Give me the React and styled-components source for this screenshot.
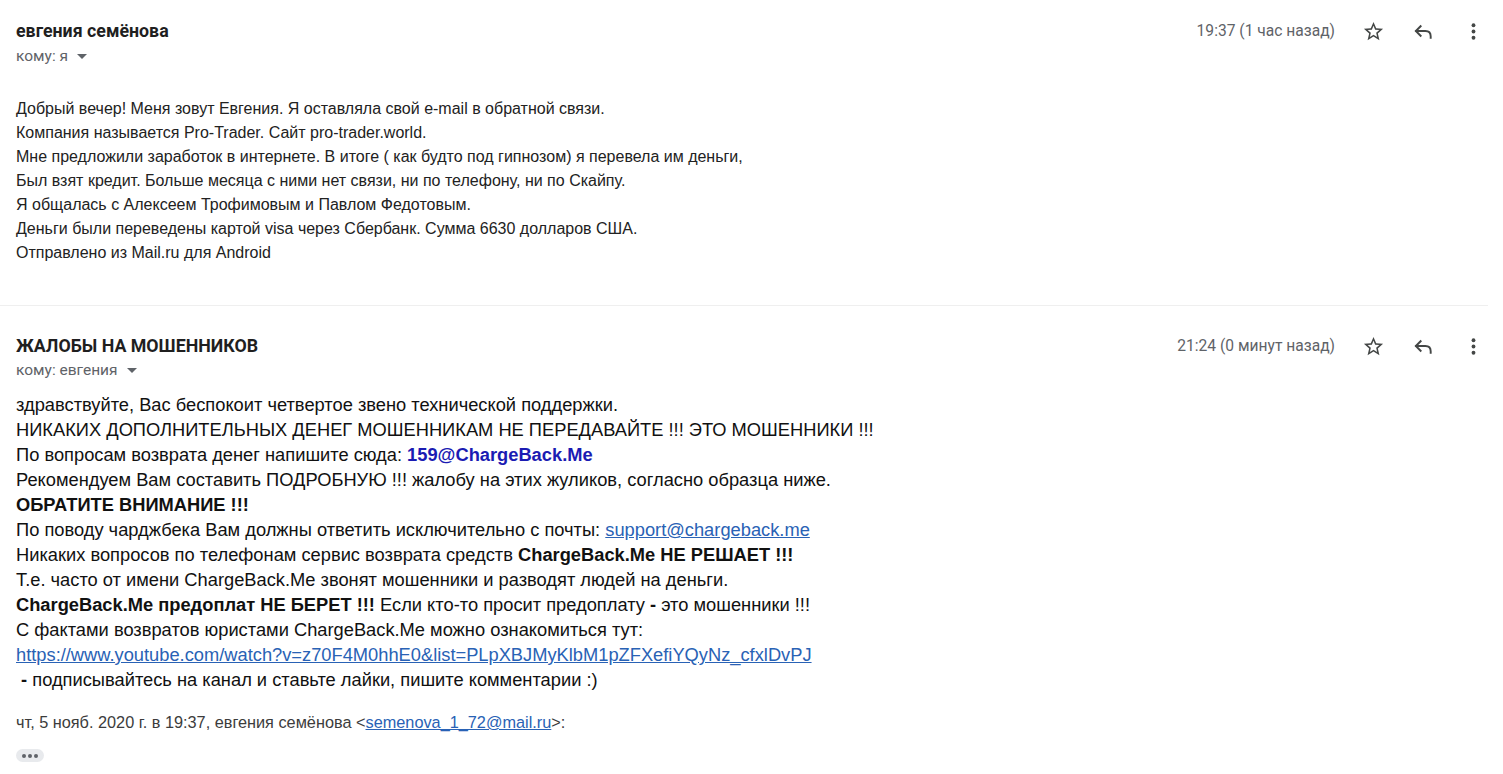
import React from "react";
import styled, { createGlobalStyle } from "styled-components";

const GlobalStyle = createGlobalStyle`
  html, body {
    margin: 0;
    padding: 0;
    background: #fff;
  }
  body {
    font-family: Roboto, "Liberation Sans", Arial, sans-serif;
    color: #222;
  }
`;

const Page = styled.div`
  width: 1503px;
  min-height: 774px;
  overflow: hidden;
`;

const Message = styled.div`
  padding: ${(p) => p.$pad};
`;

const Divider = styled.hr`
  margin: 0 15px 0 0;
  border: none;
  border-top: 1px solid #efefef;
`;

const Header = styled.div`
  display: flex;
  justify-content: space-between;
  align-items: flex-start;
  padding-left: 16px;
  padding-right: 5px;
`;

const Who = styled.div`
  display: flex;
  flex-direction: column;
  gap: ${(p) => p.$gap || "5px"};
`;

const Sender = styled.div`
  font-family: Roboto, "Liberation Sans", sans-serif;
  font-weight: 700;
  font-size: 17.8px;
  line-height: 20px;
  color: #1f1f1f;
`;

const Recipient = styled.div`
  display: flex;
  align-items: center;
  gap: 7px;
  font-family: Roboto, "Liberation Sans", sans-serif;
  font-size: 15.5px;
  line-height: 20px;
  color: #5f6368;
`;

const Caret = styled.span`
  width: 0;
  height: 0;
  border-left: 5px solid transparent;
  border-right: 5px solid transparent;
  border-top: 5px solid #5f6368;
  margin-left: 2px;
`;

const Meta = styled.div`
  display: flex;
  align-items: center;
  height: 20px;
`;

const Time = styled.span`
  font-family: Roboto, "Liberation Sans", sans-serif;
  font-size: 15.6px;
  color: #5f6368;
  margin-right: 13px;
`;

const IconButton = styled.span`
  display: inline-flex;
  align-items: center;
  justify-content: center;
  width: 50px;
  height: 20px;
  color: #444746;
`;

const Body = styled.div`
  padding-left: 16px;
  margin-top: ${(p) => p.$top};
  font-family: "Liberation Sans", Arial, sans-serif;
  font-size: ${(p) => p.$size};
  line-height: ${(p) => p.$lh};
  color: ${(p) => p.$color || "#222"};
`;

const Line = styled.div`
  white-space: nowrap;
`;

const Strong = styled.b`
  font-weight: 700;
`;

const BlueBold = styled.b`
  color: #1b1bb3;
  font-weight: 700;
`;

const Link = styled.a`
  color: #2962b5;
  text-decoration: underline;
`;

const Quote = styled.div`
  margin-top: 20px;
  font-family: "Liberation Sans", Arial, sans-serif;
  font-size: 16.3px;
  line-height: 20px;
  color: #3c3c3c;
`;

const Ellipsis = styled.span`
  display: inline-flex;
  align-items: center;
  justify-content: center;
  gap: 2px;
  margin-top: 17px;
  width: 28px;
  height: 13px;
  border-radius: 7px;
  background: #e8eaed;
`;

const Dot = styled.span`
  width: 4px;
  height: 4px;
  border-radius: 50%;
  background: #5f6368;
`;

const StarIcon = () => (
  <svg width="23" height="23" viewBox="0 0 24 24" fill="currentColor">
    <path d="M22 9.24l-7.19-.62L12 2 9.19 8.63 2 9.24l5.46 4.73L5.82 21 12 17.27 18.18 21l-1.63-7.03L22 9.24zM12 15.4l-3.76 2.27 1-4.28-3.32-2.88 4.38-.38L12 6.1l1.71 4.04 4.38.38-3.32 2.88 1 4.28L12 15.4z" />
  </svg>
);

const ReplyIcon = () => (
  <svg width="23" height="23" viewBox="0 0 24 24" fill="none" stroke="currentColor" strokeWidth="2" strokeLinecap="square">
    <path d="M9 6.5 L4 11.5 L9 16.5" />
    <path d="M4.5 11.5 H14 C17.5 11.5 19.5 13.5 19.5 17 V18.5" />
  </svg>
);

const MoreIcon = () => (
  <svg width="23" height="23" viewBox="0 0 24 24" fill="currentColor">
    <circle cx="12" cy="5.5" r="2" />
    <circle cx="12" cy="12" r="2" />
    <circle cx="12" cy="18.5" r="2" />
  </svg>
);

const MessageHeader = ({ sender, to, time, gap }) => (
  <Header>
    <Who $gap={gap}>
      <Sender>{sender}</Sender>
      <Recipient>
        кому: {to} <Caret />
      </Recipient>
    </Who>
    <Meta>
      <Time>{time}</Time>
      <IconButton>
        <StarIcon />
      </IconButton>
      <IconButton>
        <ReplyIcon />
      </IconButton>
      <IconButton>
        <MoreIcon />
      </IconButton>
    </Meta>
  </Header>
);

const firstLines = [
  "Добрый вечер! Меня зовут Евгения. Я оставляла свой e-mail в обратной связи.",
  "Компания называется Pro-Trader. Сайт pro-trader.world.",
  "Мне предложили заработок в интернете. В итоге ( как будто под гипнозом) я перевела им деньги,",
  "Был взят кредит. Больше месяца с ними нет связи, ни по телефону, ни по Скайпу.",
  "Я общалась с Алексеем Трофимовым и Павлом Федотовым.",
  "Деньги были переведены картой visa через Сбербанк. Сумма 6630 долларов США.",
  "Отправлено из Mail.ru для Android",
];

export default function App() {
  return (
    <Page>
      <GlobalStyle />
      <Message $pad="21px 0 40px">
        <MessageHeader
          sender="евгения семёнова"
          to="я"
          time="19:37 (1 час назад)"
          gap="5px"
        />
        <Body $top="31px" $size="16px" $lh="24px" $color="#222">
          {firstLines.map((l) => (
            <Line key={l}>{l}</Line>
          ))}
        </Body>
      </Message>
      <Divider />

      <Message $pad="30px 0 0">
        <MessageHeader
          sender="ЖАЛОБЫ НА МОШЕННИКОВ"
          to="евгения"
          time="21:24 (0 минут назад)"
          gap="4px"
        />
        <Body $top="12px" $size="18.3px" $lh="25px" $color="#111">
          <Line>здравствуйте, Вас беспокоит четвертое звено технической поддержки.</Line>
          <Line>НИКАКИХ ДОПОЛНИТЕЛЬНЫХ ДЕНЕГ МОШЕННИКАМ НЕ ПЕРЕДАВАЙТЕ !!! ЭТО МОШЕННИКИ !!!</Line>
          <Line>
            По вопросам возврата денег напишите сюда: <BlueBold>159@ChargeBack.Me</BlueBold>
          </Line>
          <Line>Рекомендуем Вам составить ПОДРОБНУЮ !!! жалобу на этих жуликов, согласно образца ниже.</Line>
          <Line>
            <Strong>ОБРАТИТЕ ВНИМАНИЕ !!!</Strong>
          </Line>
          <Line>
            По поводу чарджбека Вам должны ответить исключительно с почты:{" "}
            <Link href="#">support@chargeback.me</Link>
          </Line>
          <Line>
            Никаких вопросов по телефонам сервис возврата средств{" "}
            <Strong>ChargeBack.Me НЕ РЕШАЕТ !!!</Strong>
          </Line>
          <Line>Т.е. часто от имени ChargeBack.Me звонят мошенники и разводят людей на деньги.</Line>
          <Line>
            <Strong>ChargeBack.Me предоплат НЕ БЕРЕТ !!!</Strong> Если кто-то просит предоплату{" "}
            <Strong>-</Strong> это мошенники !!!
          </Line>
          <Line>С фактами возвратов юристами ChargeBack.Me можно ознакомиться тут:</Line>
          <Line>
            <Link href="#">https://www.youtube.com/watch?v=z70F4M0hhE0&amp;list=PLpXBJMyKlbM1pZFXefiYQyNz_cfxlDvPJ</Link>
          </Line>
          <Line>
            &nbsp;<Strong>-</Strong> подписывайтесь на канал и ставьте лайки, пишите комментарии :)
          </Line>
          <Quote>
            чт, 5 нояб. 2020 г. в 19:37, евгения семёнова &lt;
            <Link href="#">semenova_1_72@mail.ru</Link>&gt;:
          </Quote>
          <Ellipsis>
            <Dot />
            <Dot />
            <Dot />
          </Ellipsis>
        </Body>
      </Message>
    </Page>
  );
}
